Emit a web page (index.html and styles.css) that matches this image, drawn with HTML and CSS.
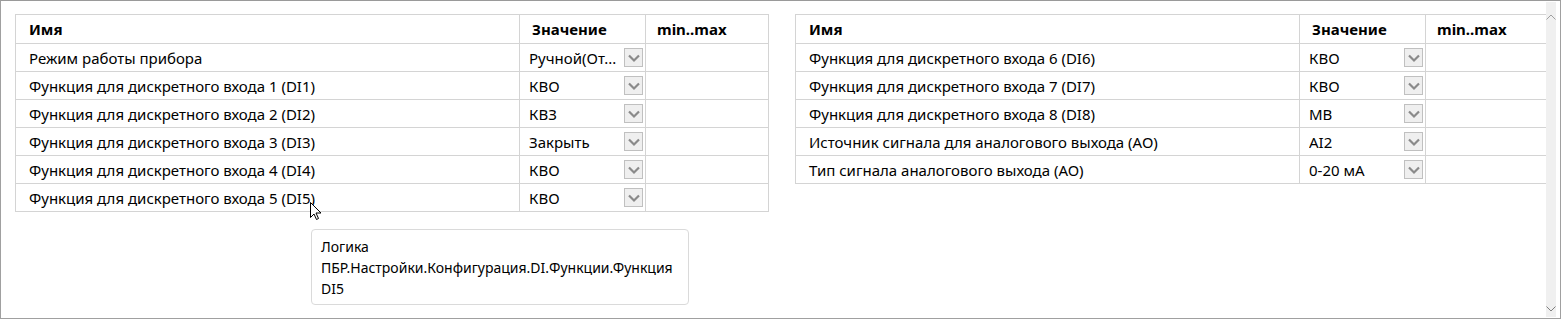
FILE: index.html
```html
<!DOCTYPE html>
<html lang="ru">
<head>
<meta charset="utf-8">
<link rel="stylesheet" href="styles.css">
</head>
<body>
<div class="frame">
  <div class="content">
    <table class="grid">
      <colgroup><col class="c-name"><col class="c-val"><col class="c-rng"></colgroup>
      <thead><tr><th>Имя</th><th class="h-val">Значение</th><th class="h-rng">min..max</th></tr></thead>
      <tbody>
        <tr><td>Режим работы прибора</td><td class="val"><div class="combo"><span class="ct">Ручной(От...</span><span class="btn"><svg viewBox="0 0 18 18" width="18" height="18"><path d="M4 6.5 L9 11.5 L14 6.5" fill="none" stroke="#8a8a8a" stroke-width="2.2"/></svg></span></div></td><td></td></tr>
        <tr><td>Функция для дискретного входа 1 (DI1)</td><td class="val"><div class="combo"><span class="ct">КВО</span><span class="btn"><svg viewBox="0 0 18 18" width="18" height="18"><path d="M4 6.5 L9 11.5 L14 6.5" fill="none" stroke="#8a8a8a" stroke-width="2.2"/></svg></span></div></td><td></td></tr>
        <tr><td>Функция для дискретного входа 2 (DI2)</td><td class="val"><div class="combo"><span class="ct">КВЗ</span><span class="btn"><svg viewBox="0 0 18 18" width="18" height="18"><path d="M4 6.5 L9 11.5 L14 6.5" fill="none" stroke="#8a8a8a" stroke-width="2.2"/></svg></span></div></td><td></td></tr>
        <tr><td>Функция для дискретного входа 3 (DI3)</td><td class="val"><div class="combo"><span class="ct">Закрыть</span><span class="btn"><svg viewBox="0 0 18 18" width="18" height="18"><path d="M4 6.5 L9 11.5 L14 6.5" fill="none" stroke="#8a8a8a" stroke-width="2.2"/></svg></span></div></td><td></td></tr>
        <tr><td>Функция для дискретного входа 4 (DI4)</td><td class="val"><div class="combo"><span class="ct">КВО</span><span class="btn"><svg viewBox="0 0 18 18" width="18" height="18"><path d="M4 6.5 L9 11.5 L14 6.5" fill="none" stroke="#8a8a8a" stroke-width="2.2"/></svg></span></div></td><td></td></tr>
        <tr><td>Функция для дискретного входа 5 (DI5)</td><td class="val"><div class="combo"><span class="ct">КВО</span><span class="btn"><svg viewBox="0 0 18 18" width="18" height="18"><path d="M4 6.5 L9 11.5 L14 6.5" fill="none" stroke="#8a8a8a" stroke-width="2.2"/></svg></span></div></td><td></td></tr>
      </tbody>
    </table>
    <table class="grid">
      <colgroup><col class="c-name"><col class="c-val"><col class="c-rng"></colgroup>
      <thead><tr><th>Имя</th><th class="h-val">Значение</th><th class="h-rng">min..max</th></tr></thead>
      <tbody>
        <tr><td>Функция для дискретного входа 6 (DI6)</td><td class="val"><div class="combo"><span class="ct">КВО</span><span class="btn"><svg viewBox="0 0 18 18" width="18" height="18"><path d="M4 6.5 L9 11.5 L14 6.5" fill="none" stroke="#8a8a8a" stroke-width="2.2"/></svg></span></div></td><td></td></tr>
        <tr><td>Функция для дискретного входа 7 (DI7)</td><td class="val"><div class="combo"><span class="ct">КВО</span><span class="btn"><svg viewBox="0 0 18 18" width="18" height="18"><path d="M4 6.5 L9 11.5 L14 6.5" fill="none" stroke="#8a8a8a" stroke-width="2.2"/></svg></span></div></td><td></td></tr>
        <tr><td>Функция для дискретного входа 8 (DI8)</td><td class="val"><div class="combo"><span class="ct">МВ</span><span class="btn"><svg viewBox="0 0 18 18" width="18" height="18"><path d="M4 6.5 L9 11.5 L14 6.5" fill="none" stroke="#8a8a8a" stroke-width="2.2"/></svg></span></div></td><td></td></tr>
        <tr><td>Источник сигнала для аналогового выхода (АО)</td><td class="val"><div class="combo"><span class="ct">AI2</span><span class="btn"><svg viewBox="0 0 18 18" width="18" height="18"><path d="M4 6.5 L9 11.5 L14 6.5" fill="none" stroke="#8a8a8a" stroke-width="2.2"/></svg></span></div></td><td></td></tr>
        <tr><td>Тип сигнала аналогового выхода (АО)</td><td class="val"><div class="combo"><span class="ct">0-20 мА</span><span class="btn"><svg viewBox="0 0 18 18" width="18" height="18"><path d="M4 6.5 L9 11.5 L14 6.5" fill="none" stroke="#8a8a8a" stroke-width="2.2"/></svg></span></div></td><td></td></tr>
      </tbody>
    </table>
  </div>
  <div class="scrollbar">
    <svg class="sb-up" viewBox="0 0 10 6" width="10" height="6"><path d="M0.5 5.5 L5 1 L9.5 5.5" fill="none" stroke="#a0a0a0" stroke-width="1"/></svg>
    <svg class="sb-down" viewBox="0 0 10 6" width="10" height="6"><path d="M0.5 0.5 L5 5 L9.5 0.5" fill="none" stroke="#808080" stroke-width="1"/></svg>
  </div>
  <div class="tooltip">Логика<br>ПБР.Настройки.Конфигурация.DI.Функции.Функция<br>DI5</div>
  <svg class="cursor" viewBox="0 0 12 19" width="12" height="19"><path d="M0.5 0.5 L0.5 15.5 L4 12 L6.5 17.5 L8.5 16.5 L6 11 L11 11 Z" fill="#fff" stroke="#000" stroke-width="1" stroke-linejoin="miter"/></svg>
</div>
</body>
</html>
```
FILE: styles.css
```css
html, body {
  margin: 0;
  padding: 0;
  background: #ffffff;
}
body {
  font-family: "Noto Sans", "Open Sans", sans-serif;
  font-size: 15px;
  color: #000;
}
.frame {
  position: relative;
  width: 1561px;
  height: 319px;
  box-sizing: border-box;
  border: 1px solid #a0a0a0;
  border-top-color: #9a9a9a;
  overflow: hidden;
}
.content {
  display: flex;
  gap: 26px;
  padding: 13px 0 0 14px;
  align-items: flex-start;
}
.grid {
  border-collapse: collapse;
  table-layout: fixed;
  width: 753px;
}
.c-name { width: 504px; }
.c-val { width: 126px; }
.c-rng { width: 123px; }
.grid th, .grid td {
  border: 1px solid #d4d4d4;
  padding: 0 0 0 13px;
  text-align: left;
  white-space: nowrap;
  overflow: hidden;
  line-height: 20px;
}
.grid th {
  height: 28px;
  font-weight: 700;
}
.grid th.h-val { padding-left: 12px; }
.grid th.h-rng { padding-left: 11px; }
.grid td {
  height: 27px;
}
.grid td.val {
  padding: 0 2px 0 9px;
}
.combo {
  display: flex;
  align-items: center;
  justify-content: space-between;
}
.ct {
  overflow: hidden;
}
.btn {
  display: block;
  width: 19px;
  height: 19px;
  box-sizing: border-box;
  border: 1px solid #c0c0c0;
  background: #efefef;
  flex: none;
}
.btn svg {
  display: block;
}
.scrollbar {
  position: absolute;
  left: 1545px;
  top: 1px;
  width: 10px;
  height: 315px;
  background: #f0f0f0;
}
.sb-up {
  position: absolute;
  left: 0;
  top: 12px;
}
.sb-down {
  position: absolute;
  left: 0;
  top: 304px;
}
.tooltip {
  position: absolute;
  left: 310px;
  top: 228px;
  width: 378px;
  height: 76px;
  box-sizing: border-box;
  border: 1px solid #dadada;
  border-radius: 4px;
  background: #fff;
  padding: 6px 9px;
  line-height: 21px;
  font-size: 14px;
}
.cursor {
  position: absolute;
  left: 309px;
  top: 201px;
}
```
